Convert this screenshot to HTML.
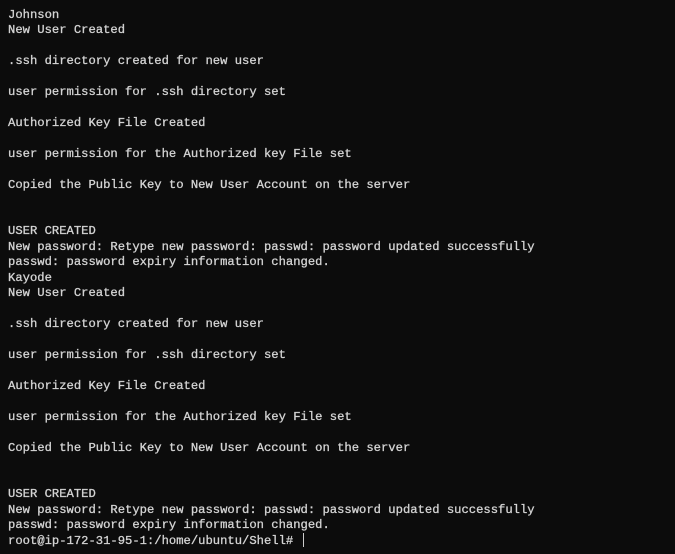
<!DOCTYPE html>
<html><head><meta charset="utf-8"><style>
html,body{margin:0;padding:0;background:#0c0c0c;width:675px;height:554px;overflow:hidden}
pre{margin:0;padding:8px 0 0 8px;font-family:"Liberation Mono",monospace;font-size:12.2px;line-height:15.45px;color:#d4d4d4;font-weight:normal;-webkit-text-stroke:0.3px #d4d4d4}
.c{display:inline-block;width:1px;height:14px;background:#cccccc;vertical-align:-3px;margin-left:2px}
</style></head><body><pre>Johnson
New User Created

.ssh directory created for new user

user permission for .ssh directory set

Authorized Key File Created

user permission for the Authorized key File set

Copied the Public Key to New User Account on the server


USER CREATED
New password: Retype new password: passwd: password updated successfully
passwd: password expiry information changed.
Kayode
New User Created

.ssh directory created for new user

user permission for .ssh directory set

Authorized Key File Created

user permission for the Authorized key File set

Copied the Public Key to New User Account on the server


USER CREATED
New password: Retype new password: passwd: password updated successfully
passwd: password expiry information changed.
root@ip-172-31-95-1:/home/ubuntu/Shell# <span class="c"></span></pre></body></html>
